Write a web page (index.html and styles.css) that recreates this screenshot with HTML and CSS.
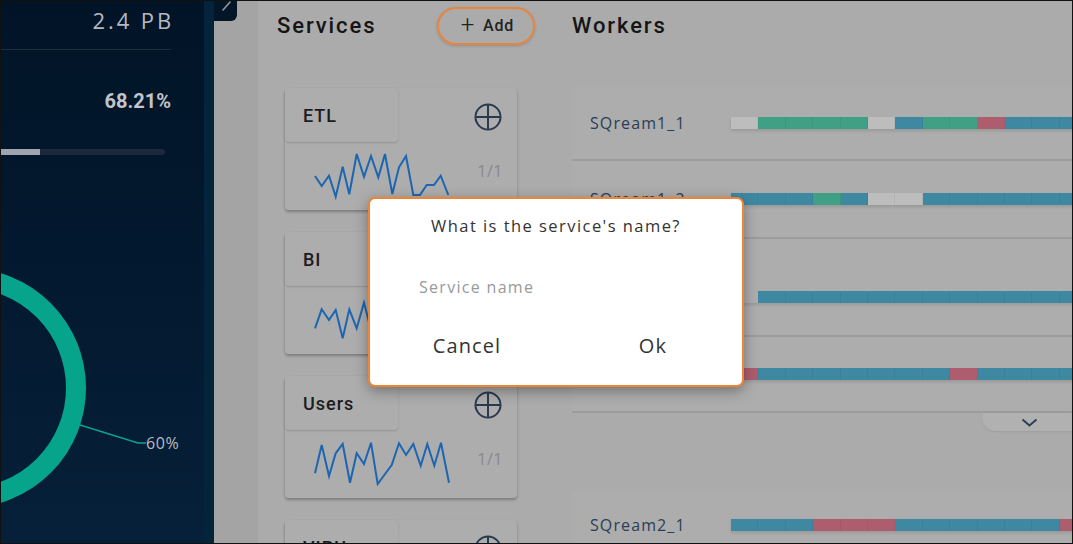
FILE: index.html
```html
<!DOCTYPE html>
<html lang="en">
<head>
<meta charset="utf-8">
<title>Services</title>
<link rel="stylesheet" href="styles.css">
</head>
<body>
<div class="app">
  <aside class="sidebar">
    <div class="stat-top">2.4 PB</div>
    <div class="divider"></div>
    <div class="pct">68.21%</div>
    <div class="progress"><div class="progress-fill" style="width:39px"></div></div>
    <svg class="donut" width="203" height="283" viewBox="0 0 203 283">
      <circle cx="-35" cy="128" r="110" fill="none" stroke="#07a48c" stroke-width="20"/>
      <polyline points="79,165 137,183 145,183" fill="none" stroke="#07a48c" stroke-width="1.5"/>
      <text x="145" y="189" class="donut-label">60%</text>
    </svg>
  </aside>
  <div class="sidebar-edge"></div>
  <div class="gutter">
    <div class="toggle">
      <svg width="23" height="20" viewBox="0 0 23 20"><path d="M9 9 L16 1" stroke="#8c95a2" stroke-width="1.6" fill="none" stroke-linecap="round"/></svg>
    </div>
  </div>
  <main class="content">
    <section class="services">
      <header class="col-head">
        <h2 class="col-title">Services</h2>
        <button class="add-btn"><span class="plus">+</span>Add</button>
      </header>
      <div class="cards">
        <div class="card">
          <div class="card-top">
            <div class="card-tab">ETL</div>
            <svg class="add-icon" width="28" height="28" viewBox="0 0 28 28"><circle cx="14" cy="14" r="12.5" fill="none" stroke="#2b3a4e" stroke-width="2"/><path d="M14 1.5 V26.5 M1.5 14 H26.5" stroke="#2b3a4e" stroke-width="2"/></svg>
          </div>
          <div class="card-body">
            <svg class="spark" width="140" height="50" viewBox="310 150 140 50"><polyline points="315,176 321.7,186 329,175.7 335.7,196.7 342.7,166.7 349.3,194.3 356.7,154 364,176.7 371,156 378.3,177.3 385,154 392.3,194 399,167.3 406,156 413.3,195 420,195 426.7,185 434,185 440.7,175.7 448.3,195"/></svg>
            <span class="ratio">1/1</span>
          </div>
        </div>
        <div class="card">
          <div class="card-top">
            <div class="card-tab">BI</div>
            <svg class="add-icon" width="28" height="28" viewBox="0 0 28 28"><circle cx="14" cy="14" r="12.5" fill="none" stroke="#2b3a4e" stroke-width="2"/><path d="M14 1.5 V26.5 M1.5 14 H26.5" stroke="#2b3a4e" stroke-width="2"/></svg>
          </div>
          <div class="card-body">
            <svg class="spark" width="140" height="50" viewBox="310 294 140 50"><polyline points="315,328.3 321.7,309.3 329,320 335.7,310 342.7,338.3 349.3,309.3 356.7,328.3 364,302.7 371,330 378,305 385,335 392,312 399,300 406,325 413,310 420,336 427,305 434,320 441,300 448,333"/></svg>
            <span class="ratio">1/1</span>
          </div>
        </div>
        <div class="card">
          <div class="card-top">
            <div class="card-tab">Users</div>
            <svg class="add-icon" width="28" height="28" viewBox="0 0 28 28"><circle cx="14" cy="14" r="12.5" fill="none" stroke="#2b3a4e" stroke-width="2"/><path d="M14 1.5 V26.5 M1.5 14 H26.5" stroke="#2b3a4e" stroke-width="2"/></svg>
          </div>
          <div class="card-body">
            <svg class="spark" width="140" height="50" viewBox="310 438 140 50"><polyline points="315,473.3 321.7,445 329,476 335.7,453.3 342.7,444 350,482.7 356.7,453.3 364,464 371,442.7 377.7,484 384.3,475 391.7,465 399,443.3 406,455 413.3,444 420.7,465.7 427.3,444 434.3,465.7 441,442.7 449,482.7"/></svg>
            <span class="ratio">1/1</span>
          </div>
        </div>
        <div class="card">
          <div class="card-top">
            <div class="card-tab">VIPUsers</div>
            <svg class="add-icon" width="28" height="28" viewBox="0 0 28 28"><circle cx="14" cy="14" r="12.5" fill="none" stroke="#2b3a4e" stroke-width="2"/><path d="M14 1.5 V26.5 M1.5 14 H26.5" stroke="#2b3a4e" stroke-width="2"/></svg>
          </div>
          <div class="card-body">
            <svg class="spark" width="140" height="50" viewBox="310 150 140 50"><polyline points="315,170 322,190 329,160 336,185 343,158 350,192 357,165 364,180 371,156 378,190 385,170 392,160 399,188 406,158 413,180 420,192 427,160 434,176 441,158 448,190"/></svg>
            <span class="ratio">1/1</span>
          </div>
        </div>
      </div>
    </section>
    <section class="workers">
      <header class="col-head">
        <h2 class="col-title">Workers</h2>
      </header>
      <div class="group">
        <div class="row r1">
          <span class="wname">SQream1_1</span>
          <div class="bar"><i class="s s-g"></i><i class="s s-gr"></i><i class="s s-gr"></i><i class="s s-gr"></i><i class="s s-gr"></i><i class="s s-g"></i><i class="s s-b"></i><i class="s s-gr"></i><i class="s s-gr"></i><i class="s s-r"></i><i class="s s-b"></i><i class="s s-b"></i><i class="s s-b"></i></div>
        </div>
        <div class="row r2">
          <span class="wname">SQream1_2</span>
          <div class="bar"><i class="s s-b"></i><i class="s s-b"></i><i class="s s-b"></i><i class="s s-gr"></i><i class="s s-b"></i><i class="s s-g"></i><i class="s s-g"></i><i class="s s-b"></i><i class="s s-b"></i><i class="s s-b"></i><i class="s s-b"></i><i class="s s-b"></i><i class="s s-b"></i></div>
        </div>
        <div class="row r3">
          <span class="wname">SQream1_3</span>
          <div class="bar"><i class="s s-e"></i><i class="s s-b"></i><i class="s s-b"></i><i class="s s-b"></i><i class="s s-b"></i><i class="s s-b"></i><i class="s s-b"></i><i class="s s-b"></i><i class="s s-b"></i><i class="s s-b"></i><i class="s s-b"></i><i class="s s-b"></i><i class="s s-b"></i></div>
        </div>
        <div class="row r4">
          <span class="wname">SQream1_4</span>
          <div class="bar"><i class="s s-r"></i><i class="s s-b"></i><i class="s s-b"></i><i class="s s-b"></i><i class="s s-b"></i><i class="s s-b"></i><i class="s s-b"></i><i class="s s-b"></i><i class="s s-r"></i><i class="s s-b"></i><i class="s s-b"></i><i class="s s-b"></i><i class="s s-b"></i></div>
        </div>
      </div>
      <div class="expand-row">
        <div class="expand"><svg width="17" height="9" viewBox="0 0 17 9"><path d="M1.5 1.5 L8.5 7.5 L15.5 1.5" fill="none" stroke="#2b3e55" stroke-width="2"/></svg></div>
      </div>
      <div class="group group2">
        <div class="row r5">
          <span class="wname">SQream2_1</span>
          <div class="bar"><i class="s s-b"></i><i class="s s-b"></i><i class="s s-b"></i><i class="s s-r"></i><i class="s s-r"></i><i class="s s-r"></i><i class="s s-b"></i><i class="s s-b"></i><i class="s s-b"></i><i class="s s-b"></i><i class="s s-b"></i><i class="s s-b"></i><i class="s s-r"></i></div>
        </div>
      </div>
    </section>
  </main>
  <div class="dialog">
    <div class="dialog-title">What is the service's name?</div>
    <input class="dialog-input" type="text" placeholder="Service name">
    <div class="dialog-actions">
      <button class="dlg-btn">Cancel</button>
      <button class="dlg-btn">Ok</button>
    </div>
  </div>
</div>
</body>
</html>
```
FILE: styles.css
```css
* { box-sizing: border-box; }
html, body { margin: 0; padding: 0; }
body { width: 1073px; height: 544px; overflow: hidden; background: #a9a9a9; font-family: "Open Sans", sans-serif; }

.app {
  position: relative;
  width: 1073px;
  height: 544px;
  border: 1px solid #111;
  display: flex;
  overflow: hidden;
}

/* sidebar */
.sidebar {
  flex: 0 0 203px;
  background: linear-gradient(180deg, #011427 0%, #03192f 50%, #062039 100%);
  display: flex;
  flex-direction: column;
  align-items: flex-end;
  padding-right: 33px;
  overflow: hidden;
}
.stat-top {
  margin-top: 6px;
  font-size: 22px;
  line-height: 26px;
  letter-spacing: 2.9px;
  color: #b5b9c1;
  margin-right: -3px;
}
.divider {
  margin-top: 16px;
  width: 203px;
  margin-right: -33px;
  height: 1px;
  background: linear-gradient(90deg, #1e2c3c 0 170px, transparent 170px);
}
.pct {
  margin-top: 40px;
  font-family: Roboto, sans-serif;
  font-weight: 700;
  font-size: 20px;
  line-height: 22px;
  color: #c1c4cb;
}
.progress {
  margin-top: 37px;
  align-self: flex-start;
  width: 164px;
  height: 6px;
  background: #1b293a;
  border-radius: 0 3px 3px 0;
  overflow: hidden;
}
.progress-fill { height: 100%; background: #a0a4ae; }
.donut {
  margin-top: 105px;
  align-self: flex-start;
  display: block;
  flex: 0 0 auto;
}
.donut-label { font-family: "Open Sans", sans-serif; font-size: 16px; letter-spacing: 0.6px; fill: #b8bcc4; }

.sidebar-edge { flex: 0 0 10px; background: #04243c; }

.gutter { flex: 0 0 44px; background: #a4a4a4; }
.toggle {
  width: 23px;
  height: 20px;
  background: #021628;
  border-bottom-right-radius: 6px;
}
.toggle svg { display: block; }

/* main content */
.content {
  flex: 1;
  display: flex;
  background: #ababab;
  min-width: 0;
}
.col-head {
  height: 49px;
  display: flex;
  align-items: center;
}
.col-title {
  margin: 0;
  font-family: Roboto, sans-serif;
  font-weight: 500;
  font-size: 22px;
  letter-spacing: 1.9px;
  color: #151515;
}
.services {
  flex: 0 0 314px;
  padding-left: 19px;
}
.add-btn {
  margin-left: 61px;
  width: 98px;
  height: 38px;
  border: 2px solid #e8843c;
  border-radius: 19px;
  background: transparent;
  font-family: Roboto, sans-serif;
  font-weight: 500;
  font-size: 16px;
  letter-spacing: 0.8px;
  color: #222;
  display: flex;
  align-items: center;
  justify-content: center;
  padding: 0 0 0 2px;
  box-shadow: 0 1px 3px rgba(0,0,0,0.18);
}
.plus { font-weight: 300; font-size: 24px; margin-right: 8px; line-height: 1; position: relative; top: -1px; }

.cards {
  margin-top: 38px;
  padding-left: 8px;
  display: flex;
  flex-direction: column;
  gap: 22px;
}
.card {
  width: 232px;
  height: 122px;
  flex: 0 0 auto;
  background: #adadad;
  border-radius: 4px;
  box-shadow: 0 2px 3px rgba(0,0,0,0.28);
  display: flex;
  flex-direction: column;
}
.card-top {
  height: 54px;
  display: flex;
  align-items: center;
  justify-content: space-between;
  padding-right: 15px;
}
.card-tab {
  width: 113px;
  height: 54px;
  border-radius: 4px;
  background: #adadad;
  box-shadow: 0 1px 2px rgba(0,0,0,0.16);
  padding-left: 18px;
  display: flex;
  align-items: center;
  font-family: Roboto, sans-serif;
  font-weight: 500;
  font-size: 18px;
  letter-spacing: 1px;
  color: #1c1c1c;
}
.add-icon { margin-top: 4px; }
.card-body {
  flex: 1;
  display: flex;
  align-items: flex-start;
  justify-content: space-between;
  padding: 8px 14px 0 25px;
}
.spark polyline { fill: none; stroke: #1c66b1; stroke-width: 2; stroke-linejoin: miter; }
.ratio {
  margin-top: 10px;
  font-size: 16px;
  letter-spacing: 0.5px;
  color: #888;
  line-height: 22px;
}

/* workers */
.workers { flex: 1; min-width: 0; }
.group {
  margin-top: 37px;
  background: #adadad;
  border-top-left-radius: 6px;
}
.row {
  display: flex;
  align-items: center;
  padding-left: 18px;
  border-bottom: 2px solid #9c9c9c;
}
.r1 { height: 74px; }
.r2 { height: 78px; }
.r3 { height: 98px; padding-top: 20px; }
.r4 { height: 76px; }
.r5 { height: 72px; border-bottom: none; }
.wname {
  flex: 0 0 141px;
  font-size: 16px;
  letter-spacing: 1.1px;
  color: #2b3e55;
}
.bar { display: flex; height: 12px; box-shadow: 0 2px 3px rgba(0,0,0,0.12); }
.s { flex: 0 0 27.4px; height: 12px; box-shadow: inset -1px 0 0 rgba(0,0,0,0.05); }
.s-g { background: #bdbdbd; }
.s-gr { background: #40a085; }
.s-b { background: #3f88a2; }
.s-r { background: #ae5d6e; }
.s-e { background: transparent; box-shadow: none; }

.expand-row { display: flex; justify-content: flex-end; }
.expand {
  width: 90px;
  height: 18px;
  background: #b1b1b1;
  border-bottom-left-radius: 14px;
  box-shadow: 0 1px 2px rgba(0,0,0,0.08);
  display: flex;
  justify-content: center;
  align-items: center;
  padding-left: 4px;
}
.expand svg { display: block; }
.group2 { margin-top: 58px; border-top-left-radius: 8px; }

/* dialog */
.dialog {
  position: absolute;
  left: 367px;
  top: 196px;
  width: 376px;
  height: 190px;
  background: #fff;
  border: 2px solid #ee8434;
  border-radius: 7px;
  box-shadow: 0 4px 14px rgba(0,0,0,0.35);
  display: flex;
  flex-direction: column;
}
.dialog-title {
  margin-top: 17px;
  text-align: center;
  font-size: 16.5px;
  line-height: 20px;
  letter-spacing: 1.45px;
  color: #333;
}
.dialog-input {
  margin: 36px 0 0 49px;
  width: 280px;
  height: 30px;
  border: none;
  outline: none;
  padding: 0;
  font-family: "Open Sans", sans-serif;
  font-size: 16px;
  letter-spacing: 1.3px;
  color: #333;
  background: transparent;
}
.dialog-input::placeholder { color: #999; }
.dialog-actions {
  margin-top: 23px;
  display: flex;
}
.dlg-btn {
  flex: 1;
  height: 40px;
  border: none;
  background: transparent;
  font-family: "Open Sans", sans-serif;
  font-size: 20px;
  letter-spacing: 1.1px;
  color: #333;
  padding: 0 0 0 8px;
}
```
